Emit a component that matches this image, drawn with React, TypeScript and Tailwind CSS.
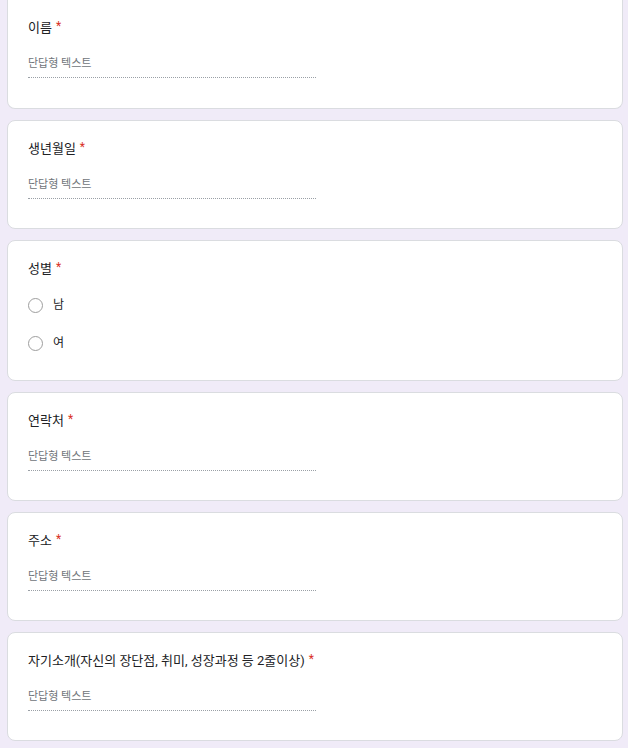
import React from "react";

const font = { fontFamily: "Roboto, 'Noto Sans CJK KR', sans-serif" };

interface QuestionProps {
  title: string;
  first?: boolean;
}

const Title: React.FC<{ title: string }> = ({ title }) => (
  <div className="h-[20px] text-[13px] leading-[20px] text-[#202124]">
    {title}
    <span className="relative top-[-2px] ml-[4px] text-[12px] text-[#d93025]">*</span>
  </div>
);

const TextQuestion: React.FC<QuestionProps> = ({ title, first }) => (
  <div
    className={
      first
        ? "h-[109px] rounded-b-[8px] border border-t-0 border-[#dadce0] bg-white pl-[20px] pt-[18px]"
        : "h-[109px] rounded-[8px] border border-[#dadce0] bg-white pl-[20px] pt-[18px]"
    }
  >
    <Title title={title} />
    <div className="mt-[18px] w-[288px] border-b border-dotted border-[#9aa0a6] pb-[5px] text-[11px] leading-[16px] text-[#70757a]">
      단답형 텍스트
    </div>
  </div>
);

const RadioQuestion: React.FC<{ title: string; options: string[] }> = ({
  title,
  options,
}) => (
  <div className="h-[141px] rounded-[8px] border border-[#dadce0] bg-white pl-[20px] pt-[18px]">
    <Title title={title} />
    <div className="mt-[14px] flex flex-col gap-[14px]">
      {options.map((o) => (
        <label key={o} className="flex h-[24px] items-center">
          <span className="h-[15px] w-[15px] rounded-full border-[1.5px] border-[#9e9e9e]" />
          <span className="ml-[10px] text-[12px] text-[#202124]">{o}</span>
        </label>
      ))}
    </div>
  </div>
);

export default function App() {
  return (
    <div
      className="min-h-[748px] bg-[#f0ebf8] pl-[7px] pr-[5px]"
      style={font}
    >
      <div className="flex flex-col gap-[11px]">
        <TextQuestion title="이름" first />
        <TextQuestion title="생년월일" />
        <RadioQuestion title="성별" options={["남", "여"]} />
        <TextQuestion title="연락처" />
        <TextQuestion title="주소" />
        <TextQuestion title="자기소개(자신의 장단점, 취미, 성장과정 등 2줄이상)" />
      </div>
    </div>
  );
}
